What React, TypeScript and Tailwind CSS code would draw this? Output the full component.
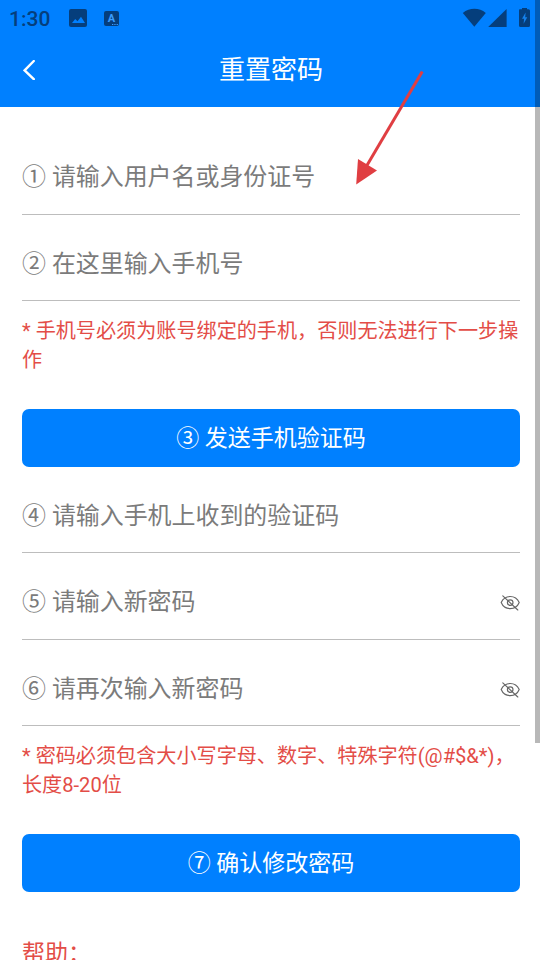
import type { ReactNode } from "react";
import clsx from "clsx";

const EyeOff = () => (
  <svg
    viewBox="0 0 20 16"
    className="mt-0.5 h-4 w-5 shrink-0 text-[#666666]"
    fill="none"
    stroke="currentColor"
    strokeWidth="1.15"
    strokeLinecap="round"
    aria-hidden="true"
  >
    <path d="M1.200 7.500C3 3.500 6 1.500 10.200 1.500S17.400 3.500 19.200 7.500C17.400 11.800 14.400 13.600 10.200 13.600S3 11.800 1.200 7.500Z" />
    <circle cx="10.200" cy="7.600" r="2.800" />
    <path d="M2.800 .8 17.800 15" />
  </svg>
);

const StatusBar = () => (
  <div className="flex h-9 items-center justify-between pl-[9px] pr-[9px] text-[#053e7c]">
    <div className="flex h-full items-center">
      <span className="w-[60px] pt-px text-[21px] leading-9 font-medium">
        1:30
      </span>
      <svg viewBox="0 0 18 18" className="h-[18px] w-[18px]">
        <rect width="18" height="18" rx="2" fill="currentColor" />
        <path d="M3 14 6.200 10 8.500 12.200 12 7.800 16 14Z" fill="#0080ff" />
      </svg>
      <div className="relative ml-[17px] flex h-[15px] w-[15px] items-center justify-center rounded-[2px] bg-[#053e7c] text-[11px] leading-none font-bold text-[#3a9cff]">
        A
        <svg viewBox="0 0 6 1" className="absolute right-px bottom-px h-px w-1.5">
          <path d="M0 .5H6" stroke="#3a9cff" strokeDasharray="1.3 1" />
        </svg>
      </div>
    </div>
    <svg viewBox="0 0 69 20" className="h-5 w-[69px]" fill="currentColor">
      <path d="M.8 4.900C7.500-.7 17.300-.7 23.800 4.900L12.300 18.700Z" />
      <path d="M26.200 19H44.600V.9Z" />
      <path d="M57.500 1.200H60V-.6H65V1.200H66.500Q68 1.200 68 2.700V17.500Q68 19 66.500 19H58.500Q57 19 57 17.500V2.700Q57 1.200 57.500 1.200Z" />
      <path d="M63.600 4.500 60 10.700H62.100L61.600 15.800 65.300 9.200H63.200Z" fill="#1480eb" />
    </svg>
  </div>
);

const Header = () => (
  <header className="h-[107px] bg-[#0080ff] text-white">
    <StatusBar />
    <div className="grid h-[66px] grid-cols-[60px_1fr_60px] items-center">
      <button type="button" aria-label="返回" className="pl-[23px]">
        <svg viewBox="0 0 12 20" className="h-5 w-3" fill="none">
          <path
            d="M10.800 1 1.600 10.300 10.800 19.200"
            stroke="white"
            strokeWidth="2.400"
            strokeLinecap="round"
          />
        </svg>
      </button>
      <h1 className="pt-px pl-0.5 text-center text-[26px] leading-[66px]">重置密码</h1>
    </div>
  </header>
);

type FieldProps = {
  label: string;
  className?: string;
  secret?: boolean;
};

const Field = ({ label, className, secret }: FieldProps) => (
  <div
    className={clsx(
      "flex items-center justify-between border-b border-[#bdbdbd] text-[#7b7b7b]",
      className
    )}
  >
    <span className="text-[23.940px] leading-9">{label}</span>
    {secret && <EyeOff />}
  </div>
);

const Hint = ({ children }: { children: ReactNode }) => (
  <p className="h-[108px] pt-4 text-[20.130px] leading-[29px] text-[#e34d47]">
    {children}
  </p>
);

const Action = ({ children }: { children: ReactNode }) => (
  <button
    type="button"
    className="block h-[58px] w-full rounded-[7px] bg-[#0080ff] pt-0.5 text-center text-[23px] text-white"
  >
    {children}
  </button>
);

export default function App() {
  return (
    <div className="relative h-[960px] w-[540px] overflow-hidden bg-white font-['Roboto','Noto_Sans_CJK_SC',sans-serif]">
      <Header />
      <main className="pt-[33px] pr-5 pl-[22px]">
        <Field label="① 请输入用户名或身份证号" className="h-[75px]" />
        <Field label="② 在这里输入手机号" className="mt-3 h-[74px]" />
        <Hint>* 手机号必须为账号绑定的手机，否则无法进行下一步操作</Hint>
        <Action>③ 发送手机验证码</Action>
        <Field label="④ 请输入手机上收到的验证码" className="mt-3 h-[74px]" />
        <Field label="⑤ 请输入新密码" className="mt-3 h-[75px]" secret />
        <Field label="⑥ 请再次输入新密码" className="mt-3 h-[74px]" secret />
        <Hint>* 密码必须包含大小写字母、数字、特殊字符(@#$&amp;*)，长度8-20位</Hint>
        <Action>⑦ 确认修改密码</Action>
        <h2 className="mt-11 text-[23px] leading-9 text-[#e34d47]">帮助：</h2>
      </main>

      {/* scroll thumb */}
      <div className="absolute top-0 right-0 h-[743px] w-[5px] bg-black/28" />

      <svg
        viewBox="0 0 70 116"
        className="pointer-events-none absolute top-[70px] left-[355px] h-[116px] w-[70px]"
      >
        <path d="M67.300 1.500 11 97" stroke="#e03e42" strokeWidth="3" />
        <path d="M1.200 114.500 3 89 22 100.500Z" fill="#e03e42" />
      </svg>
    </div>
  );
}
